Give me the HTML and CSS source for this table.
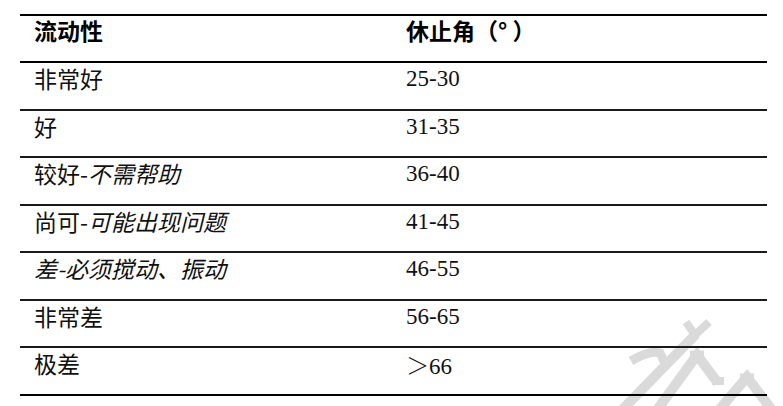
FILE: index.html
```html
<!DOCTYPE html>
<html lang="zh-CN">
<head>
<meta charset="utf-8">
<link rel="stylesheet" href="styles.css">
</head>
<body>
<div class="page">
  <svg class="watermark" width="183" height="106" viewBox="0 0 183 106" aria-hidden="true">
    <g fill="none" stroke="#dadada" stroke-width="10" stroke-linecap="butt" stroke-linejoin="miter">
      <path d="M86 22 L95 35 L109 22" stroke-width="8"/>
      <path d="M96 34 L22 110"/>
      <path d="M31 61 Q50 50 60 53 L66 65" stroke-width="9"/>
      <path d="M57 110 L97 55 L118 83"/>
      <path d="M90 54 L104 54" stroke-width="7"/>
      <path d="M112 81 L124 81" stroke-width="8"/>
      <path d="M119 110 L147 77 L172 110"/>
      <path d="M140 77 L154 77" stroke-width="7"/>
    </g>
  </svg>
  <div class="table">
    <div class="row head">
      <div class="cell c1">流动性</div>
      <div class="cell c2 cjk">休止角（° ）</div>
    </div>
    <div class="row">
      <div class="cell c1">非常好</div>
      <div class="cell c2">25-30</div>
    </div>
    <div class="row">
      <div class="cell c1">好</div>
      <div class="cell c2">31-35</div>
    </div>
    <div class="row">
      <div class="cell c1">较好-<i>不需帮助</i></div>
      <div class="cell c2">36-40</div>
    </div>
    <div class="row">
      <div class="cell c1">尚可-<i>可能出现问题</i></div>
      <div class="cell c2">41-45</div>
    </div>
    <div class="row">
      <div class="cell c1"><i>差-必须搅动、振动</i></div>
      <div class="cell c2">46-55</div>
    </div>
    <div class="row">
      <div class="cell c1">非常差</div>
      <div class="cell c2">56-65</div>
    </div>
    <div class="row last">
      <div class="cell c1">极差</div>
      <div class="cell c2"><span class="gt">＞</span>66</div>
    </div>
  </div>
</div>
</body>
</html>
```
FILE: styles.css
```css
html, body {
  margin: 0;
  padding: 0;
  background: #fff;
}

.page {
  position: relative;
  width: 783px;
  height: 406px;
  overflow: hidden;
  padding: 14px 0 0 20px;
  box-sizing: border-box;
}

.table {
  position: relative;
  z-index: 1;
  width: 747px;
  border-top: 2px solid #000;
}

.row {
  display: grid;
  grid-template-columns: 372px 1fr;
  box-sizing: border-box;
  height: 47.57px;
  border-bottom: 2px solid #1a1a1a;
}

.row.head {
  height: 47px;
  border-bottom: 2px solid #000;
}

.row.last {
  border-bottom: 2px solid #000;
}

.cell {
  font-size: 23px;
  line-height: 28px;
  color: #111;
  padding-top: 1px;
}

.c1 {
  padding-left: 14px;
  font-family: "Noto Sans CJK SC", sans-serif;
}

.c1 i {
  font-style: italic;
}

.c2 {
  padding-left: 14px;
  font-family: "Liberation Serif", "Noto Sans CJK SC", serif;
  padding-top: 2px;
}

.head .cell {
  font-weight: 700;
  color: #000;
  padding-top: 0;
}

.head .c2.cjk {
  font-family: "Noto Sans CJK SC", sans-serif;
}

.gt {
  font-family: "Noto Sans CJK SC", sans-serif;
  font-weight: 300;
}

.watermark {
  position: absolute;
  left: 600px;
  top: 300px;
  z-index: 0;
  pointer-events: none;
}
```
